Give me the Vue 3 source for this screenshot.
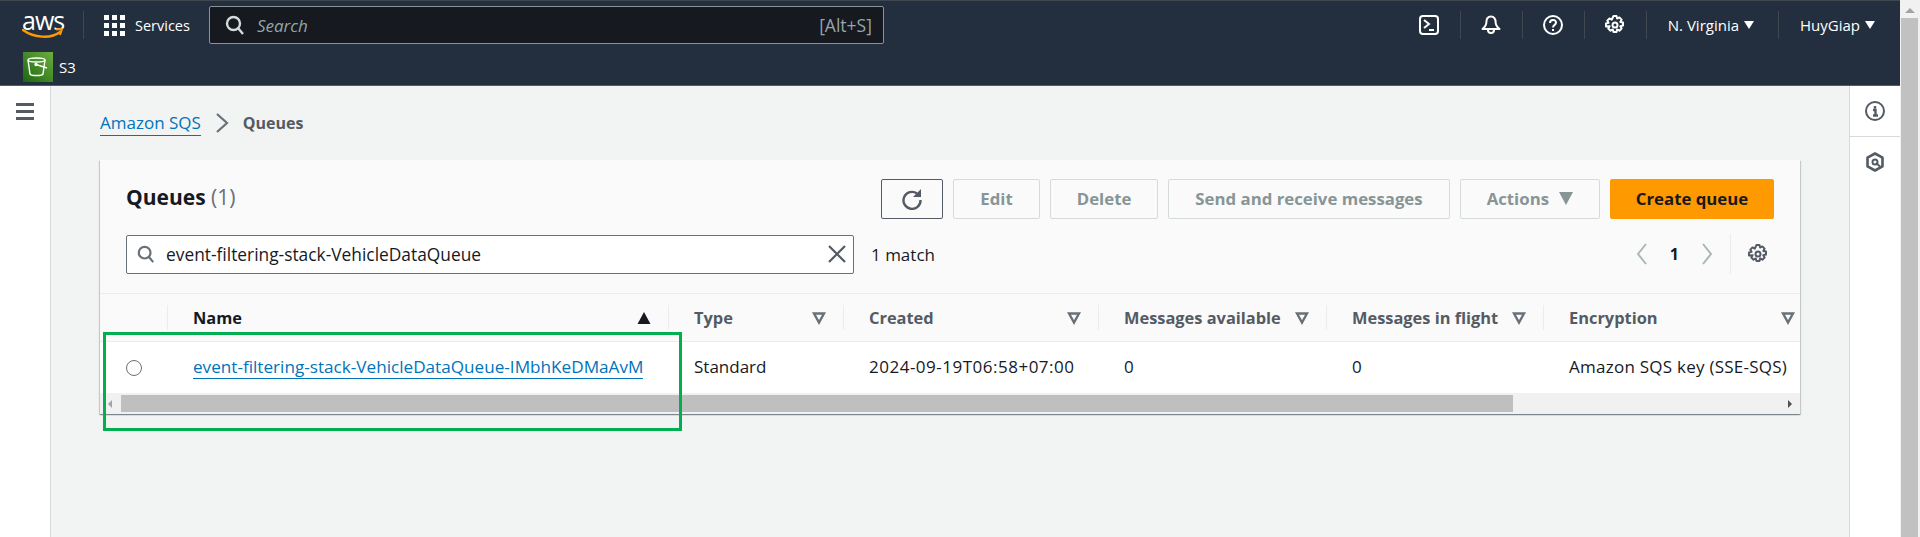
<template>
  <div class="page">
    <div class="viewport">
      <header class="top-nav">
        <div class="nav-main">
          <div class="logo">
            <span class="logo-text">aws</span>
            <svg class="smile" viewBox="0 0 42 12" width="42" height="12">
              <path d="M1 2c11 8 28 9 37 2" fill="none" stroke="#f90" stroke-width="2.4" stroke-linecap="round" />
              <path d="M34 1.5l6-.5-2 6" fill="none" stroke="#f90" stroke-width="2" stroke-linejoin="round" />
            </svg>
          </div>
          <span class="nav-sep sep-logo"></span>
          <button class="services">
            <span class="grid-icon"><i v-for="n in 9" :key="n"></i></span>
            Services
          </button>
          <div class="global-search">
            <svg class="ico" viewBox="0 0 20 20" width="20" height="20" fill="none" stroke="#d5dbdb" stroke-width="2.4">
              <circle cx="8.5" cy="8.5" r="6.5" /><path d="M13 13l5 6" />
            </svg>
            <span class="global-placeholder">Search</span>
            <span class="shortcut">[Alt+S]</span>
          </div>
          <div class="nav-right">
            <span class="nav-icon">
              <svg viewBox="0 0 20 20" width="20" height="20" fill="none" stroke="#fff" stroke-width="2">
                <rect x="1" y="1" width="18" height="18" rx="3" /><path d="M5 5l5 4-5 4M10 15h5" />
              </svg>
            </span>
            <span class="nav-sep"></span>
            <span class="nav-icon">
              <svg viewBox="0 0 20 20" width="20" height="20" fill="none" stroke="#fff" stroke-width="2">
                <path d="M10 1.500c-3 0-4.600 2.400-4.600 5.500 0 3-1.400 5-3.900 7h17c-2.500-2-3.900-4-3.900-7 0-3.100-1.600-5.500-4.600-5.500z" stroke-linejoin="round" />
                <path d="M7 15a3 3 0 0 0 6 0" />
              </svg>
            </span>
            <span class="nav-sep"></span>
            <span class="nav-icon">
              <svg viewBox="0 0 20 20" width="20" height="20" fill="none" stroke="#fff" stroke-width="2">
                <circle cx="10" cy="10" r="9" /><path d="M7 8c0-4 6-4 6-.5 0 2.500-3 2.500-3 5" /><path d="M10 14v2" />
              </svg>
            </span>
            <span class="nav-sep"></span>
            <span class="nav-icon">
              <svg viewBox="0 0 20 20" width="20" height="20" fill="none" stroke="#fff" stroke-width="2">
                <circle cx="10" cy="10" r="2.500" />
                <path d="M8.500 1h3l.6 2.600 2.300-1.200 2.200 2.200-1.300 2.300 2.700.6v3l-2.700.7 1.300 2.300-2.200 2.200-2.300-1.300-.6 2.600h-3l-.7-2.600-2.300 1.300-2.200-2.200 1.300-2.300L1 11.500v-3l2.600-.6-1.300-2.300 2.200-2.200 2.300 1.200z" stroke-linejoin="round" />
              </svg>
            </span>
            <span class="nav-sep"></span>
            <span class="nav-menu region">N. Virginia <i class="caret"></i></span>
            <span class="nav-sep"></span>
            <span class="nav-menu user">HuyGiap <i class="caret"></i></span>
          </div>
        </div>
        <div class="nav-fav">
          <span class="s3-icon">
            <svg viewBox="0 0 30 30" width="30" height="30" fill="none" stroke="#fff" stroke-width="1.400">
              <ellipse cx="13.500" cy="8" rx="8.500" ry="2" />
              <path d="M5 8l2 14c.5 2 12.500 2 13 0l2-14" />
              <circle cx="13" cy="12.500" r="1" fill="#fff" /><path d="M13 12.500l11 3.500" />
            </svg>
          </span>
          <span class="fav-label">S3</span>
        </div>
      </header>

      <div class="body-row">
        <aside class="left-rail">
          <span class="burger"><i></i><i></i><i></i></span>
        </aside>

        <main class="content">
          <nav class="crumbs">
            <a class="crumb-link">Amazon SQS</a>
            <svg viewBox="0 0 14 22" width="14" height="22" fill="none" stroke="#687078" stroke-width="2.2"><path d="M2 2l10 9-10 9" /></svg>
            <span class="crumb-here">Queues</span>
          </nav>

          <section class="card">
            <div class="card-head">
              <div class="title-row">
                <h1 class="title">Queues <span class="count">(1)</span></h1>
                <div class="actions">
                  <button class="btn btn-refresh">
                    <svg viewBox="0 0 22 22" width="22" height="22" fill="none" stroke="#545b64" stroke-width="2.400">
                      <path d="M16 5.500A8.500 8.500 0 1 0 19.500 12" /><path d="M20 1v8h-8z" fill="#545b64" stroke="none" />
                    </svg>
                  </button>
                  <button v-for="b in disabledButtons" :key="b" class="btn btn-off">{{ b }}</button>
                  <button class="btn btn-off btn-actions">Actions <i class="caret caret-off"></i></button>
                  <button class="btn btn-primary">Create queue</button>
                </div>
              </div>
              <div class="filter-row">
                <div class="filter">
                  <svg viewBox="0 0 20 20" width="18" height="20" fill="none" stroke="#687078" stroke-width="2.4">
                    <circle cx="8.500" cy="8.500" r="6.500" /><path d="M13 13l5 6" />
                  </svg>
                  <span class="filter-text">event-filtering-stack-VehicleDataQueue</span>
                  <svg viewBox="0 0 20 20" width="20" height="20" fill="none" stroke="#545b64" stroke-width="2.200"><path d="M2 2l16 16M18 2L2 18" /></svg>
                </div>
                <span class="match">1 match</span>
                <div class="pager">
                  <svg viewBox="0 0 12 24" width="12" height="24" fill="none" stroke="#aab7b8" stroke-width="2"><path d="M10 2L2 12l8 10" /></svg>
                  <span class="page-num">1</span>
                  <svg viewBox="0 0 12 24" width="12" height="24" fill="none" stroke="#aab7b8" stroke-width="2"><path d="M2 2l8 10-8 10" /></svg>
                  <span class="pager-sep"></span>
                  <svg class="pref" viewBox="0 0 20 20" width="20" height="20" fill="none" stroke="#545b64" stroke-width="2">
                    <circle cx="10" cy="10" r="2.500" />
                    <path d="M8.500 1h3l.6 2.600 2.300-1.200 2.200 2.200-1.300 2.300 2.700.6v3l-2.700.7 1.300 2.300-2.200 2.200-2.300-1.300-.6 2.600h-3l-.7-2.600-2.300 1.300-2.200-2.200 1.300-2.300L1 11.500v-3l2.600-.6-1.300-2.300 2.200-2.200 2.300 1.200z" stroke-linejoin="round" />
                  </svg>
                </div>
              </div>
            </div>

            <div class="table-row head-row">
              <div class="th th-select"></div>
              <div v-for="c in columns" :key="c.label" class="th" :class="{ sorted: c.sorted }">
                <span>{{ c.label }}</span>
                <svg viewBox="0 0 14 14" width="14" height="14">
                  <path v-if="c.sorted" d="M7 1l6.500 12H.5z" fill="#16191f" />
                  <path v-else d="M2 2.500h10L7 11.500z" fill="none" stroke="#687078" stroke-width="2.400" />
                </svg>
              </div>
            </div>
            <div class="table-row data-row">
              <div class="td td-select"><span class="radio"></span></div>
              <div class="td"><a class="queue-link">event-filtering-stack-VehicleDataQueue-IMbhKeDMaAvM</a></div>
              <div class="td">Standard</div>
              <div class="td td-date">2024-09-19T06:58+07:00</div>
              <div class="td">0</div>
              <div class="td">0</div>
              <div class="td td-enc">Amazon SQS key (SSE-SQS)</div>
            </div>
            <div class="h-scroll">
              <i class="arrow-left"></i>
              <span class="h-thumb"></span>
              <i class="arrow-right"></i>
            </div>
          </section>
        </main>

        <aside class="right-rail">
          <div class="rail-btn">
            <svg viewBox="0 0 20 20" width="20" height="20" fill="none" stroke="#545b64" stroke-width="2">
              <circle cx="10" cy="10" r="9" /><path d="M8 9h2.500v5M8 14.500h5M10 5v2.500" stroke-width="2.400" />
            </svg>
          </div>
          <div class="rail-btn">
            <svg viewBox="0 0 20 20" width="20" height="20" fill="none" stroke="#545b64" stroke-width="2.600">
              <path d="M10 1.500l7.500 4.200v8.600L10 18.500l-7.500-4.200V5.700z" stroke-linejoin="round" />
              <circle cx="10" cy="10" r="2.500" stroke-width="2" /><path d="M11 11l4 3.500" stroke-width="2" />
            </svg>
          </div>
        </aside>
      </div>

      <!-- green annotation drawn over the table -->
      <div class="highlight"></div>
    </div>

    <div class="v-scroll">
      <i class="arrow-up"></i>
      <span class="v-thumb"></span>
    </div>
  </div>
</template>

<script setup>
const disabledButtons = ['Edit', 'Delete', 'Send and receive messages']

const columns = [
  { label: 'Name', sorted: true },
  { label: 'Type' },
  { label: 'Created' },
  { label: 'Messages available' },
  { label: 'Messages in flight' },
  { label: 'Encryption' }
]
</script>

<style>
html,
body {
  margin: 0;
  overflow: hidden;
}
</style>

<style scoped>
.page {
  display: flex;
  width: 1920px;
  height: 537px;
  overflow: hidden;
  font-family: "Open Sans", "Liberation Sans", sans-serif;
  font-size: 17px;
  color: #16191f;
  background: #f2f3f3;
}

.viewport {
  position: relative;
  flex: 1;
  min-width: 0;
  display: flex;
  flex-direction: column;
}

/* top bar */
.top-nav {
  height: 86px;
  box-sizing: border-box;
  background: #232f3e;
  border-top: 1px solid #414750;
  border-bottom: 1px solid #545b64;
  color: #fff;
}

.nav-main {
  display: flex;
  align-items: center;
  height: 48px;
  padding-left: 22px;
}

.logo {
  width: 40px;
  height: 28px;
  position: relative;
  margin-top: -2px;
}

.logo-text {
  display: block;
  font-size: 25px;
  line-height: 20px;
  letter-spacing: -1px;
  text-align: center;
}

.smile {
  position: absolute;
  left: 0;
  top: 18px;
}

.nav-sep {
  width: 1px;
  height: 28px;
  background: #414750;
}

.sep-logo {
  margin: 0 20px 0 21px;
}

.services {
  display: flex;
  align-items: center;
  gap: 10px;
  padding: 0;
  border: 0;
  background: none;
  color: #fff;
  font: inherit;
  font-size: 14.5px;
}

.grid-icon {
  display: grid;
  grid-template-columns: repeat(3, 5px);
  gap: 3px;
}

.grid-icon i {
  width: 5px;
  height: 5px;
  background: #fff;
}

.global-search {
  display: flex;
  align-items: center;
  box-sizing: border-box;
  width: 675px;
  height: 38px;
  margin-left: 19px;
  padding: 0 11px 0 15px;
  background: #16191f;
  border: 1px solid #879596;
  border-radius: 2px;
}

.global-placeholder {
  margin-left: 12px;
  color: #95a5a6;
  font-style: italic;
}

.shortcut {
  margin-left: auto;
  color: #95a5a6;
  font-size: 17.5px;
}

.nav-right {
  display: flex;
  align-items: center;
  margin-left: auto;
  padding-right: 25px;
}

.nav-icon {
  display: flex;
  justify-content: center;
  width: 61px;
}

.nav-menu {
  display: flex;
  align-items: center;
  gap: 5px;
  font-size: 15px;
}

.region {
  padding: 0 24px 0 21px;
}

.user {
  padding-left: 21px;
}

.caret {
  width: 0;
  height: 0;
  border-left: 5px solid transparent;
  border-right: 5px solid transparent;
  border-top: 8px solid #fff;
}

.nav-fav {
  display: flex;
  align-items: center;
  gap: 6px;
  height: 36px;
  padding-left: 23px;
}

.s3-icon {
  display: block;
  width: 30px;
  height: 30px;
  background: linear-gradient(45deg, #1b660f, #6cae3e);
}

.fav-label {
  font-size: 15px;
}

/* page body */
.body-row {
  flex: 1;
  min-height: 0;
  display: flex;
}

.left-rail {
  width: 51px;
  flex: none;
  box-sizing: border-box;
  background: #fff;
  border-right: 1px solid #d5dbdb;
  padding: 17px 0 0 16px;
}

.burger {
  display: flex;
  flex-direction: column;
  gap: 4px;
  width: 18px;
}

.burger i {
  height: 3px;
  background: #545b64;
}

.content {
  flex: 1;
  min-width: 0;
  padding: 0 49px;
}

.crumbs {
  display: flex;
  align-items: center;
  gap: 14px;
  height: 74px;
}

.crumb-link {
  color: #0073bb;
  border-bottom: 1px solid #0073bb;
  line-height: 24px;
}

.crumb-here {
  color: #545b64;
  font-weight: 700;
  font-size: 16px;
}

.card {
  background: #fff;
  box-shadow: 0 1px 1px 0 rgba(0, 28, 36, 0.3), 1px 1px 1px 0 rgba(0, 28, 36, 0.15), -1px 1px 1px 0 rgba(0, 28, 36, 0.15);
}

.card-head {
  box-sizing: border-box;
  height: 134px;
  padding: 19px 26px 0;
  background: #fafafa;
  border-bottom: 1px solid #eaeded;
}

.title-row {
  display: flex;
  align-items: center;
}

.title {
  margin: 0 0 4px;
  font-size: 21px;
  font-weight: 700;
}

.count {
  color: #687078;
  font-weight: 400;
}

.actions {
  display: flex;
  gap: 10px;
  margin-left: auto;
}

.btn {
  box-sizing: border-box;
  height: 40px;
  padding: 0 26px 2px;
  border: 1px solid #d5dbdb;
  border-radius: 2px;
  background: #fff;
  font: inherit;
  font-size: 16.8px;
  font-weight: 700;
}

.btn-refresh {
  display: flex;
  align-items: center;
  justify-content: center;
  width: 62px;
  padding: 0;
  border-color: #545b64;
  background: #fafafa;
}

.btn-off {
  color: #879596;
  background: #fafafa;
}

.btn-actions {
  display: flex;
  align-items: center;
  gap: 10px;
}

.caret-off {
  border-left-width: 7px;
  border-right-width: 7px;
  border-top: 13px solid #879596;
}

.btn-primary {
  width: 164px;
  padding: 0 0 2px;
  border-color: #f90;
  background: #f90;
  color: #16191f;
}

.filter-row {
  display: flex;
  align-items: center;
  margin-top: 15px;
}

.filter {
  display: flex;
  align-items: center;
  box-sizing: border-box;
  width: 728px;
  height: 39px;
  padding: 0 6px 0 10px;
  background: #fff;
  border: 1px solid #687078;
  border-radius: 2px;
}

.filter-text {
  flex: 1;
  margin-left: 11px;
  font-size: 17.35px;
}

.match {
  margin-left: 17px;
}

.pager {
  display: flex;
  align-items: center;
  margin-left: auto;
  height: 40px;
}

.page-num {
  margin: 0 22px;
  font-weight: 700;
  font-size: 16px;
}

.pager-sep {
  width: 1px;
  height: 40px;
  margin-left: 17px;
  background: #eaeded;
}

.pref {
  margin: 0 6px 0 17px;
}

.table-row {
  display: grid;
  grid-template-columns: 68px 501px 175px 255px 228px 217px 256px;
}

.head-row {
  height: 48px;
  background: #fafafa;
  border-bottom: 1px solid #eaeded;
  box-sizing: border-box;
  font-weight: 700;
  font-size: 16.4px;
  color: #545b64;
}

.th {
  display: flex;
  align-items: center;
  justify-content: space-between;
  box-sizing: border-box;
  margin: 11px 0;
  padding: 0 17px 0 25px;
  border-right: 1px solid #eaeded;
}

.th.sorted {
  color: #16191f;
}

.th:last-child {
  border-right: 0;
  padding-right: 5px;
}

.data-row {
  height: 51px;
  align-items: center;
  background: #fff;
}

.td {
  padding-left: 25px;
  white-space: nowrap;
  margin-top: -2px;
}

.td-date {
  letter-spacing: 0.5px;
}

.td-enc {
  letter-spacing: 0.25px;
}

.td-select {
  padding-left: 26px;
  display: flex;
  margin-top: 0;
}

.radio {
  box-sizing: border-box;
  width: 16px;
  height: 16px;
  border: 1.5px solid #687078;
  border-radius: 50%;
}

.queue-link {
  color: #0073bb;
  border-bottom: 1px solid #0073bb;
  font-size: 17.15px;
}

.h-scroll {
  display: flex;
  align-items: center;
  height: 21px;
  background: #f1f1f1;
}

.h-thumb {
  width: 1392px;
  height: 17px;
  margin-left: 9px;
  background: #bfbfbf;
}

.arrow-left {
  margin-left: 8px;
  border-top: 4px solid transparent;
  border-bottom: 4px solid transparent;
  border-right: 4px solid #a3a3a3;
}

.arrow-right {
  margin-left: auto;
  margin-right: 8px;
  border-top: 4px solid transparent;
  border-bottom: 4px solid transparent;
  border-left: 4px solid #505050;
}

.right-rail {
  width: 51px;
  flex: none;
  box-sizing: border-box;
  background: #fff;
  border-left: 1px solid #d5dbdb;
}

.rail-btn {
  display: flex;
  align-items: center;
  justify-content: center;
  height: 50px;
  border-bottom: 1px solid #d5dbdb;
}

.rail-btn:last-child {
  border-bottom: 0;
}

.highlight {
  position: absolute;
  left: 103px;
  top: 332px;
  width: 579px;
  height: 99px;
  box-sizing: border-box;
  border: 3px solid #00b050;
}

.v-scroll {
  width: 20px;
  flex: none;
  display: flex;
  flex-direction: column;
  align-items: center;
  background: #f1f1f1;
}

.arrow-up {
  margin: 8px 0 5px;
  border-left: 5px solid transparent;
  border-right: 5px solid transparent;
  border-bottom: 5px solid #a3a3a3;
}

.v-thumb {
  flex: 1;
  align-self: flex-start;
  width: 17px;
  margin-left: 1px;
  background: #c1c1c1;
}
</style>
